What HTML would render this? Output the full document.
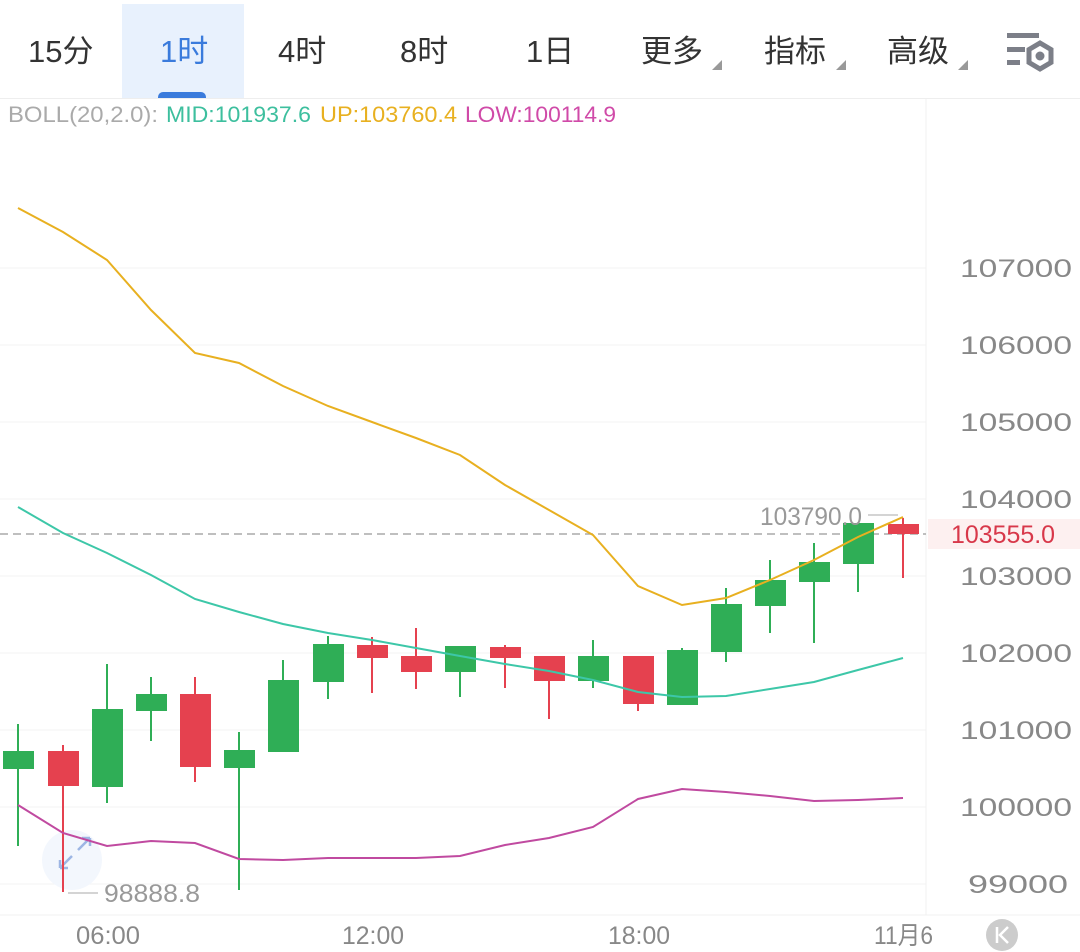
<!DOCTYPE html>
<html><head><meta charset="utf-8"><style>
html,body{margin:0;padding:0;background:#fff;width:1080px;height:952px;overflow:hidden;font-family:"Liberation Sans","Noto Sans CJK SC",sans-serif}
.tab{position:absolute;top:32px;font-size:31px;color:#333;line-height:40px}
</style></head><body>
<div style="position:absolute;left:122px;top:4px;width:122px;height:94px;background:#e8f1fd"></div>
<div style="position:absolute;left:158px;top:92px;width:48px;height:7px;background:#3a7bdc;border-radius:5px 5px 0 0"></div>
<div style="position:absolute;left:0;top:98px;width:1080px;height:1px;background:#eee"></div>
<div class="tab" style="left:28px">15分</div>
<div class="tab" style="left:160px;color:#3a7bdc">1时</div>
<div class="tab" style="left:278px">4时</div>
<div class="tab" style="left:400px">8时</div>
<div class="tab" style="left:526px">1日</div>
<div class="tab" style="left:641px">更多</div>
<div class="tab" style="left:764px">指标</div>
<div class="tab" style="left:887px">高级</div>
<svg width="1080" height="952" style="position:absolute;left:0;top:0" xmlns="http://www.w3.org/2000/svg">
<polygon points="712,70 722,60 722,70" fill="#999"/>
<polygon points="836,70 846,60 846,70" fill="#999"/>
<polygon points="958,70 968,60 968,70" fill="#999"/>
<rect x="1007" y="33" width="32" height="5" fill="#7c7f88"/>
<rect x="1007" y="47" width="18" height="5" fill="#7c7f88"/>
<rect x="1007" y="60" width="13" height="5" fill="#7c7f88"/>
<polygon points="1040,43 1051,49.5 1051,62.5 1040,69 1029,62.5 1029,49.5" fill="none" stroke="#7c7f88" stroke-width="5"/>
<circle cx="1040" cy="56" r="4.5" fill="#7c7f88"/>
<text x="8" y="122" font-size="22" fill="#aaa" textLength="150" lengthAdjust="spacingAndGlyphs">BOLL(20,2.0):</text>
<text x="166" y="122" font-size="22" fill="#3dbf9e" textLength="145" lengthAdjust="spacingAndGlyphs">MID:101937.6</text>
<text x="320" y="122" font-size="22" fill="#e8b020" textLength="137" lengthAdjust="spacingAndGlyphs">UP:103760.4</text>
<text x="465" y="122" font-size="22" fill="#d04aa8" textLength="151" lengthAdjust="spacingAndGlyphs">LOW:100114.9</text>
<line x1="926" y1="99" x2="926" y2="915" stroke="#f0f0f0"/>
<line x1="0" y1="915" x2="1080" y2="915" stroke="#f0f0f0"/>
<g stroke="#f3f3f3">
<line x1="0" y1="268" x2="926" y2="268"/><line x1="0" y1="345" x2="926" y2="345"/><line x1="0" y1="422" x2="926" y2="422"/><line x1="0" y1="499" x2="926" y2="499"/><line x1="0" y1="576" x2="926" y2="576"/><line x1="0" y1="653" x2="926" y2="653"/><line x1="0" y1="730" x2="926" y2="730"/><line x1="0" y1="807" x2="926" y2="807"/><line x1="0" y1="884" x2="926" y2="884"/>
</g>
<g font-size="25" fill="#888" lengthAdjust="spacingAndGlyphs">
<text x="960" y="277" textLength="112" lengthAdjust="spacingAndGlyphs">107000</text><text x="960" y="354" textLength="112" lengthAdjust="spacingAndGlyphs">106000</text><text x="960" y="431" textLength="112" lengthAdjust="spacingAndGlyphs">105000</text><text x="960" y="508" textLength="112" lengthAdjust="spacingAndGlyphs">104000</text><text x="960" y="585" textLength="112" lengthAdjust="spacingAndGlyphs">103000</text><text x="960" y="662" textLength="112" lengthAdjust="spacingAndGlyphs">102000</text><text x="960" y="739" textLength="112" lengthAdjust="spacingAndGlyphs">101000</text><text x="960" y="816" textLength="112" lengthAdjust="spacingAndGlyphs">100000</text><text x="968" y="893" textLength="100" lengthAdjust="spacingAndGlyphs">99000</text>
</g>
<rect x="928" y="519" width="152" height="30" fill="#fdf0f0"/>
<text x="951" y="543" font-size="25" fill="#d8384a" textLength="104" lengthAdjust="spacingAndGlyphs">103555.0</text>
<line x1="0" y1="534" x2="926" y2="534" stroke="#aaa" stroke-dasharray="8,5" stroke-width="1.5"/>
<circle cx="72" cy="860" r="30" fill="#f3f7fd"/>
<g fill="none" stroke="#9db6e4" stroke-width="2.5"><path d="M60 868 L72 856 M60 868 v-8 M60 868 h8"/><path d="M90 838 L78 850 M90 838 v8 M90 838 h-8"/></g>
<g stroke-width="2">
<g stroke="#2fae56" fill="#2fae56">
<line x1="18" y1="724" x2="18" y2="846"/><rect x="4" y="752" width="29" height="16"/>
<line x1="107" y1="664" x2="107" y2="803"/><rect x="93" y="710" width="29" height="76"/>
<line x1="151" y1="677" x2="151" y2="741"/><rect x="137" y="695" width="29" height="15"/>
<line x1="239" y1="732" x2="239" y2="890"/><rect x="225" y="751" width="29" height="16"/>
<line x1="283" y1="660" x2="283" y2="751"/><rect x="269" y="681" width="29" height="70"/>
<line x1="328" y1="636" x2="328" y2="699"/><rect x="314" y="645" width="29" height="36"/>
<line x1="460" y1="646" x2="460" y2="697"/><rect x="446" y="647" width="29" height="24"/>
<line x1="593" y1="640" x2="593" y2="688"/><rect x="579" y="657" width="29" height="23"/>
<line x1="682" y1="648" x2="682" y2="704"/><rect x="668" y="651" width="29" height="53"/>
<line x1="726" y1="588" x2="726" y2="662"/><rect x="712" y="605" width="29" height="46"/>
<line x1="770" y1="560" x2="770" y2="633"/><rect x="756" y="581" width="29" height="24"/>
<line x1="814" y1="543" x2="814" y2="643"/><rect x="800" y="563" width="29" height="18"/>
<line x1="858" y1="524" x2="858" y2="592"/><rect x="844" y="524" width="29" height="39"/>
</g>
<g stroke="#e5414f" fill="#e5414f">
<line x1="63" y1="745" x2="63" y2="892"/><rect x="49" y="752" width="29" height="33"/>
<line x1="195" y1="677" x2="195" y2="782"/><rect x="181" y="695" width="29" height="71"/>
<line x1="372" y1="637" x2="372" y2="693"/><rect x="358" y="646" width="29" height="11"/>
<line x1="416" y1="628" x2="416" y2="689"/><rect x="402" y="657" width="29" height="14"/>
<line x1="505" y1="645" x2="505" y2="688"/><rect x="491" y="648" width="29" height="9"/>
<line x1="549" y1="657" x2="549" y2="719"/><rect x="535" y="657" width="29" height="23"/>
<line x1="638" y1="657" x2="638" y2="711"/><rect x="624" y="657" width="29" height="46"/>
<line x1="903" y1="518" x2="903" y2="578"/><rect x="889" y="525" width="29" height="8"/>
</g>
</g>
<g fill="none" stroke-width="2">
<polyline stroke="#e8b020" points="18,208 63,232 107,260 151,310 195,353 239,363 283,386 328,406 372,422 416,438 460,455 505,485 549,510 593,535 638,586 682,605 726,598 770,580 814,560 858,537 903,517"/>
<polyline stroke="#3dc7a8" points="18,507 63,533 107,553 151,575 195,599 239,612 283,624 328,633 372,640 416,648 460,656 505,664 549,671 593,680 638,692 682,697 726,696 770,689 814,682 858,670 903,658"/>
<polyline stroke="#c04aa0" points="18,805 63,833 107,846 151,841 195,843 239,859 283,860 328,858 372,858 416,858 460,856 505,845 549,838 593,827 638,799 682,789 726,792 770,796 814,801 858,800 903,798"/>
</g>
<text x="760" y="525" font-size="25" fill="#999" textLength="102" lengthAdjust="spacingAndGlyphs">103790.0</text>
<line x1="868" y1="515" x2="898" y2="515" stroke="#aaa"/>
<line x1="68" y1="893" x2="98" y2="893" stroke="#aaa"/>
<text x="104" y="902" font-size="25" fill="#999" textLength="96" lengthAdjust="spacingAndGlyphs">98888.8</text>
<g font-size="25" fill="#888">
<text x="76" y="944" textLength="64" lengthAdjust="spacingAndGlyphs">06:00</text><text x="342" y="944" textLength="62" lengthAdjust="spacingAndGlyphs">12:00</text><text x="608" y="944" textLength="62" lengthAdjust="spacingAndGlyphs">18:00</text><text x="874" y="944" textLength="59" lengthAdjust="spacingAndGlyphs">11月6</text>
</g>
<circle cx="1002" cy="935" r="16" fill="#ccc"/>
<path d="M997 927 v16 M1008 927 l-8 8 l8 8" stroke="#fff" stroke-width="2.5" fill="none"/>
</svg>
</body></html>
